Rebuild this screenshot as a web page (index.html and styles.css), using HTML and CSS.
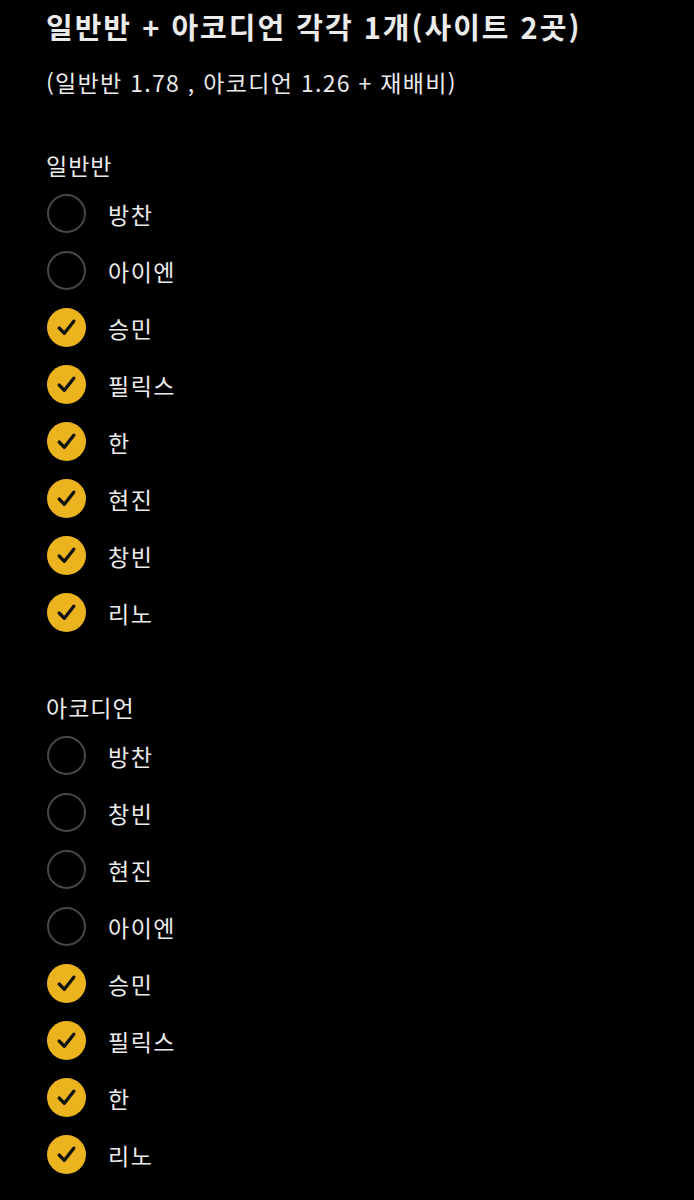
FILE: index.html
```html
<!DOCTYPE html>
<html lang="ko">
<head>
<meta charset="utf-8">
<link rel="stylesheet" href="styles.css">
</head>
<body>
<main class="page">
  <h1 class="title">일반반 + 아코디언 각각 1개(사이트 2곳)</h1>
  <p class="subtitle">(일반반 1.78 , 아코디언 1.26 + 재배비)</p>

  <section class="group">
    <h2 class="group-label">일반반</h2>
    <ul class="list">
      <li class="item"><span class="box"></span><span class="name">방찬</span></li>
      <li class="item"><span class="box"></span><span class="name">아이엔</span></li>
      <li class="item"><span class="box on"><svg viewBox="0 0 40 40"><path d="M12.5 20.5 L17.8 26 L27.5 13.5"/></svg></span><span class="name">승민</span></li>
      <li class="item"><span class="box on"><svg viewBox="0 0 40 40"><path d="M12.5 20.5 L17.8 26 L27.5 13.5"/></svg></span><span class="name">필릭스</span></li>
      <li class="item"><span class="box on"><svg viewBox="0 0 40 40"><path d="M12.5 20.5 L17.8 26 L27.5 13.5"/></svg></span><span class="name">한</span></li>
      <li class="item"><span class="box on"><svg viewBox="0 0 40 40"><path d="M12.5 20.5 L17.8 26 L27.5 13.5"/></svg></span><span class="name">현진</span></li>
      <li class="item"><span class="box on"><svg viewBox="0 0 40 40"><path d="M12.5 20.5 L17.8 26 L27.5 13.5"/></svg></span><span class="name">창빈</span></li>
      <li class="item"><span class="box on"><svg viewBox="0 0 40 40"><path d="M12.5 20.5 L17.8 26 L27.5 13.5"/></svg></span><span class="name">리노</span></li>
    </ul>
  </section>

  <section class="group second">
    <h2 class="group-label">아코디언</h2>
    <ul class="list">
      <li class="item"><span class="box"></span><span class="name">방찬</span></li>
      <li class="item"><span class="box"></span><span class="name">창빈</span></li>
      <li class="item"><span class="box"></span><span class="name">현진</span></li>
      <li class="item"><span class="box"></span><span class="name">아이엔</span></li>
      <li class="item"><span class="box on"><svg viewBox="0 0 40 40"><path d="M12.5 20.5 L17.8 26 L27.5 13.5"/></svg></span><span class="name">승민</span></li>
      <li class="item"><span class="box on"><svg viewBox="0 0 40 40"><path d="M12.5 20.5 L17.8 26 L27.5 13.5"/></svg></span><span class="name">필릭스</span></li>
      <li class="item"><span class="box on"><svg viewBox="0 0 40 40"><path d="M12.5 20.5 L17.8 26 L27.5 13.5"/></svg></span><span class="name">한</span></li>
      <li class="item"><span class="box on"><svg viewBox="0 0 40 40"><path d="M12.5 20.5 L17.8 26 L27.5 13.5"/></svg></span><span class="name">리노</span></li>
    </ul>
  </section>
</main>
</body>
</html>
```

FILE: styles.css
```css
html, body {
  margin: 0;
  padding: 0;
  background: #000;
}
body {
  font-family: "Noto Sans CJK KR", "Noto Sans", sans-serif;
  color: #ebebeb;
}
.page {
  padding: 6px 0 0 46px;
}
.title {
  margin: 0;
  font-size: 29px;
  font-weight: 700;
  line-height: 40px;
  letter-spacing: 2px;
}
.subtitle {
  margin: 20px 0 0;
  font-size: 23px;
  font-weight: 400;
  line-height: 32px;
  letter-spacing: 1.3px;
}
.group {
  margin-top: 51px;
}
.group.second {
  margin-top: 59px;
}
.group-label {
  margin: 0;
  font-size: 23px;
  font-weight: 400;
  line-height: 32px;
  letter-spacing: 1px;
}
.list {
  list-style: none;
  margin: 13px 0 0;
  padding: 0;
  display: flex;
  flex-direction: column;
  gap: 18px;
}
.item {
  display: flex;
  align-items: center;
  height: 39px;
}
.box {
  box-sizing: border-box;
  width: 39px;
  height: 39px;
  border-radius: 50%;
  border: 2.5px solid #474747;
  flex: none;
  margin-left: 1px;
  display: flex;
  align-items: center;
  justify-content: center;
}
.box.on {
  border: none;
  background: #ebb41e;
}
.box svg {
  width: 39px;
  height: 39px;
}
.box path {
  fill: none;
  stroke: #111;
  stroke-width: 3.4;
  stroke-linecap: round;
  stroke-linejoin: round;
}
.name {
  margin-left: 22px;
  font-size: 23px;
  line-height: 32px;
  letter-spacing: 1.5px;
}
```
